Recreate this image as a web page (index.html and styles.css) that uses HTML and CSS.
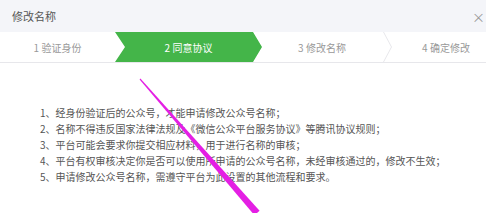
FILE: index.html
```html
<!DOCTYPE html>
<html lang="zh-CN">
<head>
  <meta charset="UTF-8">
  <meta name="viewport" content="width=device-width, initial-scale=1.0">
  <title>修改名称</title>
  <link rel="stylesheet" href="styles.css">
</head>
<body>
  <div class="dialog">
    <div class="dialog-head">
      <span class="dialog-title">修改名称</span>
      <span class="dialog-close">×</span>
    </div>

    <div class="steps">
      <div class="step step-1">1 验证身份</div>
      <div class="step step-2 current">2 同意协议</div>
      <div class="step step-3">3 修改名称</div>
      <div class="step step-4">4 确定修改</div>
    </div>

    <!-- 协议内容 -->
    <ol class="rules">
      <li>1、经身份验证后的公众号，才能申请修改公众号名称；</li>
      <li>2、名称不得违反国家法律法规及《微信公众平台服务协议》等腾讯协议规则；</li>
      <li>3、平台可能会要求你提交相应材料，用于进行名称的审核；</li>
      <li>4、平台有权审核决定你是否可以使用所申请的公众号名称，未经审核通过的，修改不生效；</li>
      <li>5、申请修改公众号名称，需遵守平台为此设置的其他流程和要求。</li>
    </ol>
  </div>

  <svg class="mark" width="486" height="213" viewBox="0 0 486 213">
    <polygon points="140.4,78.6 259.6,210.8 254.4,215.2 139.6,79.4" fill="#e41fe4"/>
  </svg>
</body>
</html>
```

FILE: styles.css
```css
body {
  margin: 0;
  font-family: "Noto Sans CJK SC", "Noto Sans", sans-serif;
  background: #fff;
  overflow: hidden;
}
.dialog {
  width: 486px;
  height: 213px;
  overflow: hidden;
}
.dialog-head {
  height: 32px;
  background: #f4f5f9;
  display: flex;
  align-items: center;
  justify-content: space-between;
  padding-left: 12px;
}
.dialog-title {
  font-size: 11px;
  color: #555;
}
.dialog-close {
  font-size: 13px;
  color: #999;
  margin-right: 1px;
}
.steps {
  display: flex;
  height: 30px;
  border-bottom: 1px solid #e7e7eb;
  font-size: 10px;
  color: #999;
  position: relative;
}
.step {
  display: flex;
  align-items: center;
  justify-content: center;
  flex-shrink: 0;
}
.step-1 {
  width: 115px;
}
.step-2 {
  width: 147px;
  margin-right: -9px;
  background: #44b549;
  color: #fff;
  position: relative;
  z-index: 1;
  clip-path: polygon(0 0, 138px 0, 147px 50%, 138px 100%, 0 100%, 10px 50%);
}
.step-3 {
  width: 138px;
  position: relative;
}
.step-3::after {
  content: "";
  position: absolute;
  right: -1px;
  top: 0;
  width: 9px;
  height: 30px;
  background: #e7e7eb;
  clip-path: polygon(0 0, 1px 0, 9px 50%, 1px 100%, 0 100%, 8px 50%);
}
.step-4 {
  width: 110px;
}
.rules {
  list-style: none;
  margin: 0;
  padding: 42px 0 0 40px;
  font-size: 10px;
  line-height: 16px;
  color: #555;
  white-space: nowrap;
}
.mark {
  position: absolute;
  top: 0;
  left: 0;
  pointer-events: none;
}
```
